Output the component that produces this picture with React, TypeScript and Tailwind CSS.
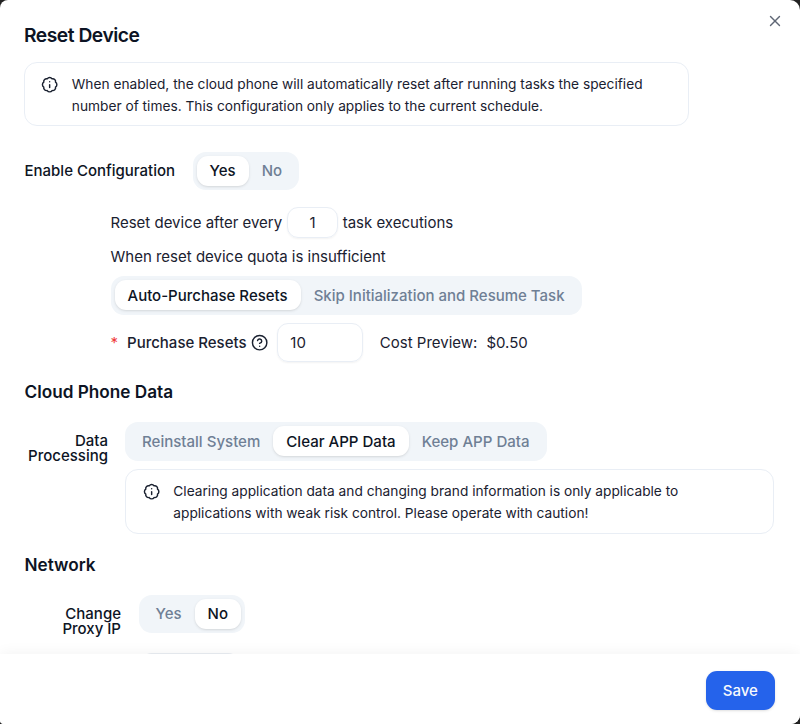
import React, { useState } from 'react';
import { BadgeInfo, CircleHelp, X } from 'lucide-react';

interface SegmentedProps {
  options: string[];
  defaultValue: string;
}

const Segmented: React.FC<SegmentedProps> = ({ options, defaultValue }) => {
  const [value, setValue] = useState(defaultValue);

  return (
    <div className="flex h-[38.5px] w-fit items-center rounded-[13px] bg-[#f1f5f9] p-1">
      {options.map((option) => (
        <button
          key={option}
          type="button"
          onClick={() => setValue(option)}
          className={`h-[30px] whitespace-nowrap rounded-[11px] px-[13px] font-medium ${
            option === value ? 'bg-white text-[#0d1424] shadow-sm' : 'text-[#6f7f95]'
          }`}
        >
          {option}
        </button>
      ))}
    </div>
  );
};

interface NoticeProps {
  className: string;
  children: React.ReactNode;
}

const Notice: React.FC<NoticeProps> = ({ className, children }) => (
  <div
    className={`flex rounded-[13px] border border-[#e9eef5] text-[13.73px] leading-[21.6px] text-[#1a2130] ${className}`}
  >
    <BadgeInfo className="mt-[12.5px] ml-[16.5px] size-[17.3px] shrink-0" />
    <p className="mt-[11px] ml-[13.5px]">{children}</p>
  </div>
);

const App = () => {
  const [interval, setInterval] = useState('1');
  const [resets, setResets] = useState('10');

  return (
    <div className="h-[724px] w-[800px] overflow-hidden bg-[#222]">
      <div className="relative flex h-full flex-col overflow-hidden rounded-tl-[8px] rounded-tr-[10px] rounded-br-[9px] rounded-bl-[4px] bg-white font-['Inter',sans-serif] text-[15px] leading-[21.6px] text-[#0d1424]">
        <button type="button" aria-label="Close" className="absolute top-3 right-[16px] text-[#5f6675]">
          <X className="size-[18px]" strokeWidth={1.8} />
        </button>

        <main className="h-[654px] shrink-0 overflow-hidden px-6 pt-[25.5px]">
          <h1 className="h-[36.5px] text-[19.25px] leading-[19.4px] font-semibold tracking-tight">Reset Device</h1>

          <Notice className="-ml-[0.5px] h-16 w-[665.5px]">
            When enabled, the cloud phone will automatically reset after running tasks the specified
            <br />
            number of times. This configuration only applies to the current schedule.
          </Notice>

          <div className="mt-[26px] flex h-[38px] items-center gap-[17.5px] pl-[0.5px]">
            <span className="font-medium">Enable Configuration</span>
            <Segmented options={['Yes', 'No']} defaultValue="Yes" />
          </div>

          <section className="ml-[86.5px] text-[#1a2130]">
            <div className="mt-[17px] flex h-[31px] items-center">
              <span>Reset device after every</span>
              <input
                value={interval}
                onChange={(e) => setInterval(e.target.value)}
                className="mx-[4.5px] h-[31px] w-[51.5px] rounded-[11px] border border-[#e9eef5] text-center shadow-xs"
              />
              <span>task executions</span>
            </div>
            <p className="mt-2 mb-[8.5px]">When reset device quota is insufficient</p>
            <Segmented
              options={['Auto-Purchase Resets', 'Skip Initialization and Resume Task']}
              defaultValue="Auto-Purchase Resets"
            />
            <div className="mt-[8.5px] flex h-[39px] items-center">
              <span className="mr-[9px] text-[#f03a3a]">*</span>
              <span className="font-medium">Purchase Resets</span>
              <CircleHelp className="ml-[4.5px] size-[17.3px]" />
              <input
                value={resets}
                onChange={(e) => setResets(e.target.value)}
                className="ml-[8.5px] h-[39px] w-[86px] rounded-[11px] border border-[#e9eef5] px-[12.5px] shadow-xs"
              />
              <span className="ml-[17px]">Cost Preview:</span>
              <span className="ml-[9px]">$0.50</span>
            </div>
          </section>

          <h2 className="mt-[19px] pl-[0.5px] text-[17.2px] font-semibold">Cloud Phone Data</h2>
          <div className="mt-[19.5px] flex">
            <span className="mr-[17px] w-[84px] pt-[11px] text-right leading-[15.1px] font-medium">
              Data Processing
            </span>
            <div className="text-[15.06px]">
              <Segmented
                options={['Reinstall System', 'Clear APP Data', 'Keep APP Data']}
                defaultValue="Clear APP Data"
              />
              <Notice className="mt-[8.5px] h-[65px] w-[649px]">
                Clearing application data and changing brand information is only applicable to
                <br />
                applications with weak risk control. Please operate with caution!
              </Notice>
            </div>
          </div>

          <h2 className="mt-[19.5px] pl-[0.5px] text-[17.2px] font-semibold">Network</h2>
          <div className="mt-[19.5px] flex h-[38.5px]">
            <span className="mr-[17.5px] w-[97px] pt-[11.5px] pl-8 text-right leading-[15.1px] font-medium">
              Change Proxy IP
            </span>
            <Segmented options={['Yes', 'No']} defaultValue="No" />
          </div>
          {/* next row, still below the fold of the scroll area */}
          <div className="mt-[19.5px] ml-[115px] h-[38.5px] w-[102px] rounded-[13px] bg-[#e9edf2]" />
        </main>

        <footer className="z-10 flex flex-1 items-center justify-end bg-white pt-[3px] pr-[25px] shadow-[0_-1px_13px_rgba(0,0,0,0.05)]">
          <button
            type="button"
            className="h-[39px] w-[69.5px] rounded-[11px] bg-[#2563eb] font-medium text-slate-50 shadow-sm"
          >
            Save
          </button>
        </footer>
      </div>
    </div>
  );
};

export default App;
